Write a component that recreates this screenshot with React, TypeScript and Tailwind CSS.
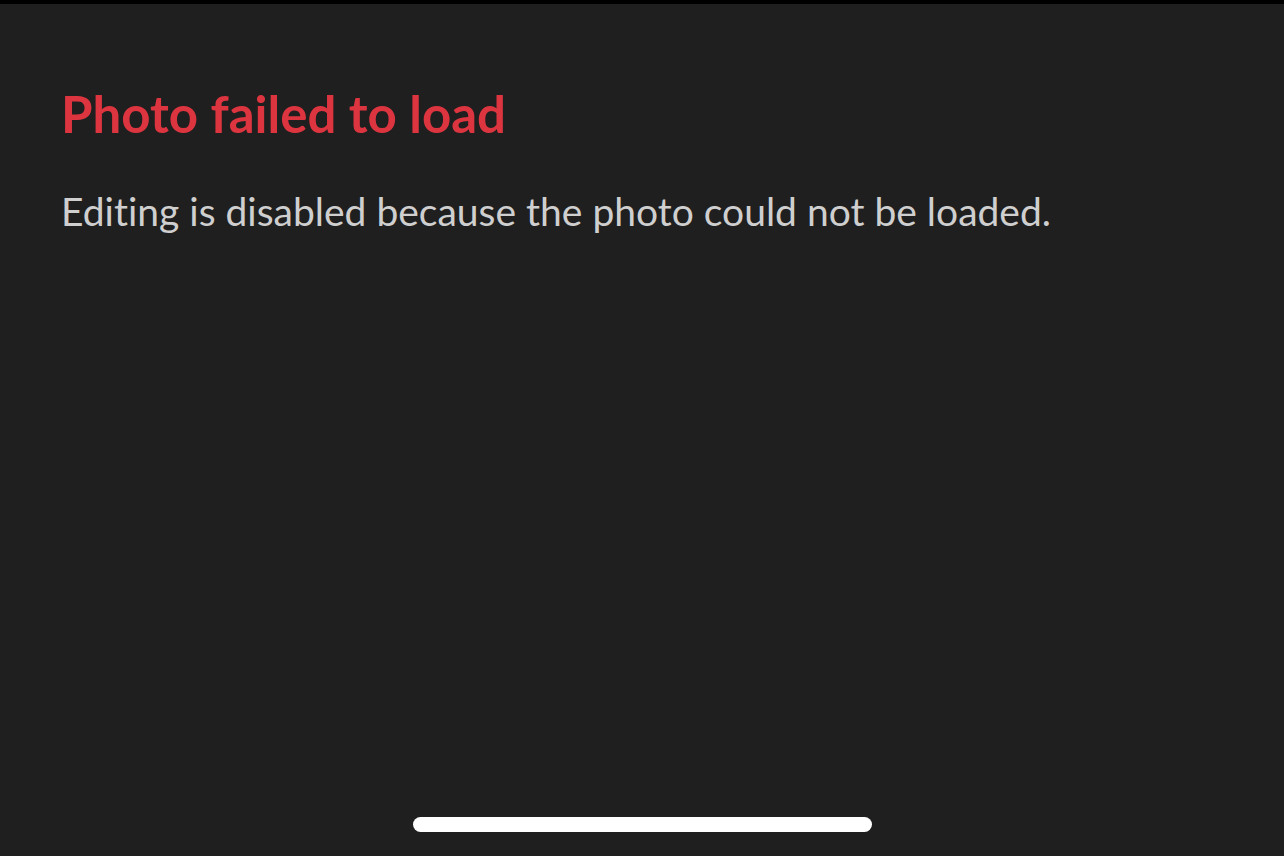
export default function App() {
  return (
    <div className="w-[1284px] h-[856px] bg-[#1f1f1f] flex flex-col overflow-hidden [font-variant-ligatures:none]" style={{ fontFamily: "Lato, 'Open Sans', sans-serif" }}>
      <div className="h-[4px] bg-black w-full" />
      <div className="flex-1 px-[61px] pt-[80px]">
        <h1 className="text-[51px] leading-[60px] font-bold text-[#dd3540]">Photo failed to load</h1>
        <p className="mt-[43px] text-[39px] leading-[48px] text-[#cfcfcf]">Editing is disabled because the photo could not be loaded.</p>
      </div>
      <div className="flex justify-center pb-[24px]">
        <div className="w-[459px] h-[15px] rounded-full bg-white" />
      </div>
    </div>
  );
}
